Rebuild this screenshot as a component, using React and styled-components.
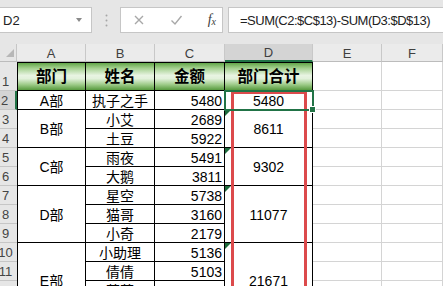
import React from "react";
import styled, { createGlobalStyle, css } from "styled-components";

const GlobalStyle = createGlobalStyle`
  html, body { margin: 0; padding: 0; background: #fff; overflow: hidden; }
  body { width: 443px; height: 286px; font-family: "Liberation Sans", "Noto Sans CJK SC", sans-serif; }
`;

const Toolbar = styled.div`
  height: 44px;
  box-sizing: border-box;
  padding-top: 7px;
  background: #e6e6e6;
  display: flex;
  align-items: flex-start;
`;

const Box = styled.div`
  height: 26px;
  box-sizing: border-box;
  background: #fff;
  border: 1px solid #c6c6c6;
  display: flex;
  align-items: center;
`;

const NameBox = styled(Box)`
  width: 92px;
  border-left: none;
  padding: 0 9px 0 3px;
  justify-content: space-between;
  font-size: 13px;
  color: #222;
`;

const Caret = styled.span`
  width: 0;
  height: 0;
  border-left: 3px solid transparent;
  border-right: 3px solid transparent;
  border-top: 4px solid #8a8a8a;
`;

const Grip = styled.div`
  width: 28px;
  height: 26px;
  display: flex;
  align-items: center;
  justify-content: center;
`;

const ActionBox = styled(Box)`
  width: 103px;
  padding: 0 6px 0 12px;
  justify-content: space-between;
  color: #a8a8a8;
`;

const Fx = styled.span`
  font-family: "Liberation Serif", serif;
  font-style: italic;
  font-size: 14px;
  color: #3c3c3c;
  sub { font-size: 10px; vertical-align: -1px; }
`;

const FormulaBox = styled(Box)`
  flex: 1;
  margin-left: 5px;
  border-right: none;
  padding-left: 11px;
  font-size: 13px;
  letter-spacing: -0.5px;
  color: #222;
  white-space: nowrap;
`;

const Sheet = styled.div`
  display: grid;
  grid-template-columns: 17px 69px 69px 70px 88px 69px 1fr;
  grid-template-rows: 18px 29px repeat(12, 19px);
`;

const place = css`
  grid-column: ${(p) => p.$c} / span 1;
  grid-row: ${(p) => p.$r} / span ${(p) => p.$rs || 1};
`;

const Corner = styled.div`
  grid-column: 1; grid-row: 1;
  background: #e6e6e6;
  border-right: 1px solid #c6c6c6;
  border-bottom: 1px solid #bcbcbc;
  box-sizing: border-box;
  display: flex;
  align-items: flex-end;
  justify-content: flex-end;
  padding: 0 2px 4px 0;
`;

const CornerMark = styled.span`
  width: 0; height: 0;
  border-left: 8px solid transparent;
  border-bottom: 8px solid #b7b7b7;
`;

const ColHead = styled.div`
  ${place}
  box-sizing: border-box;
  background: ${(p) => (p.$sel ? "#d4d4d4" : "#ebebeb")};
  border-right: 1px solid #c8c8c8;
  border-bottom: ${(p) => (p.$sel ? "2px solid #217346" : "1px solid #bcbcbc")};
  color: #404040;
  font-size: 13px;
  display: flex;
  align-items: center;
  justify-content: center;
  padding-top: 1px;
`;

const RowHead = styled.div`
  ${place}
  box-sizing: border-box;
  background: ${(p) => (p.$sel ? "#d4d4d4" : "#e6e6e6")};
  border-bottom: 1px solid #c6c6c6;
  border-right: ${(p) => (p.$sel ? "2px solid #217346" : "none")};
  color: #444;
  font-size: 13px;
  display: flex;
  align-items: flex-end;
  justify-content: center;
  padding: 0 6px 1px 0;
  white-space: nowrap;
`;

const Cell = styled.div`
  ${place}
  position: relative;
  box-sizing: border-box;
  border-right: 1px solid #000;
  border-bottom: 1px solid #000;
  border-left: ${(p) => (p.$c === 2 ? "1px solid #000" : "none")};
  border-top: ${(p) => (p.$head ? "1px solid #000" : "none")};
  display: flex;
  align-items: center;
  justify-content: ${(p) => (p.$right ? "flex-end" : "center")};
  padding: ${(p) => (p.$right ? "1px 2px 0 0" : "1px 0 0 0")};
  color: #000;
  font-size: ${(p) => (p.$head ? "15.5px" : "14px")};
  font-weight: ${(p) => (p.$head ? 700 : 400)};
  line-height: 1;
  white-space: nowrap;
  background: ${(p) =>
    p.$head
      ? "linear-gradient(180deg, #62a648 0%, #a6d191 20%, #e8f4e2 46%, #e2f1db 58%, #9dcb88 80%, #579a3e 100%)"
      : "#fff"};
`;

const Blank = styled.div`
  ${place}
  box-sizing: border-box;
  border-right: 1px solid #d4d4d4;
  border-bottom: 1px solid #d4d4d4;
`;

const Flag = styled.span`
  position: absolute;
  left: 0;
  top: 0;
  width: 0; height: 0;
  border-top: 6px solid #1d6b3c;
  border-right: 6px solid transparent;
`;

const RedFrame = styled.div`
  ${place}
  margin: 0 6px;
  border: 3px solid #dc4a4c;
  border-bottom: none;
  pointer-events: none;
  z-index: 2;
`;

const SelectFrame = styled.div`
  ${place}
  position: relative;
  margin: -1px;
  border: 2px solid #217346;
  pointer-events: none;
  z-index: 3;
`;

const Handle = styled.span`
  position: absolute;
  right: -4px;
  bottom: -4px;
  width: 5px;
  height: 5px;
  background: #217346;
  border: 1px solid #fff;
`;

const data = [
  { a: "A部", as: 1, b: "执子之手", c: 5480, d: "5480", ds: 1 },
  { a: "B部", as: 2, b: "小艾", c: 2689, d: "8611", ds: 2, flag: true },
  { b: "土豆", c: 5922 },
  { a: "C部", as: 2, b: "雨夜", c: 5491, d: "9302", ds: 2, flag: true },
  { b: "大鹅", c: 3811 },
  { a: "D部", as: 3, b: "星空", c: 5738, d: "11077", ds: 3, flag: true },
  { b: "猫哥", c: 3160 },
  { b: "小奇", c: 2179 },
  { a: "E部", as: 4, b: "小助理", c: 5136, d: "21671", ds: 4, flag: true },
  { b: "倩倩", c: 5103 },
  { b: "萌萌", c: 5912 },
  { b: "小米", c: 5520 },
];

function CrossIcon() {
  return (
    <svg width="12" height="12" viewBox="0 0 12 12">
      <path d="M2 2 L10 10 M10 2 L2 10" stroke="#a8a8a8" strokeWidth="1.4" fill="none" />
    </svg>
  );
}

function CheckIcon() {
  return (
    <svg width="13" height="12" viewBox="0 0 13 12">
      <path d="M1.5 6.5 L5 10 L11.5 2" stroke="#a8a8a8" strokeWidth="1.4" fill="none" />
    </svg>
  );
}

function GripIcon() {
  return (
    <svg width="3" height="13" viewBox="0 0 3 13">
      <circle cx="1.5" cy="1.5" r="1" fill="#a6a6a6" />
      <circle cx="1.5" cy="6.5" r="1" fill="#a6a6a6" />
      <circle cx="1.5" cy="11.5" r="1" fill="#a6a6a6" />
    </svg>
  );
}

export default function App() {
  const cols = ["A", "B", "C", "D", "E", "F"];
  return (
    <>
      <GlobalStyle />
      <Toolbar>
        <NameBox>
          <span>D2</span>
          <Caret />
        </NameBox>
        <Grip>
          <GripIcon />
        </Grip>
        <ActionBox>
          <CrossIcon />
          <CheckIcon />
          <Fx>
            f<sub>x</sub>
          </Fx>
        </ActionBox>
        <FormulaBox>=SUM(C2:$C$13)-SUM(D3:$D$13)</FormulaBox>
      </Toolbar>
      <Sheet>
        <Corner>
          <CornerMark />
        </Corner>
        {cols.map((c, i) => (
          <ColHead key={c} $c={i + 2} $r={1} $sel={c === "D"}>
            {c}
          </ColHead>
        ))}
        {Array.from({ length: 13 }, (_, i) => (
          <RowHead key={i} $c={1} $r={i + 2} $sel={i === 1}>
            {i + 1}
          </RowHead>
        ))}
        <Cell $c={2} $r={2} $head>部门</Cell>
        <Cell $c={3} $r={2} $head>姓名</Cell>
        <Cell $c={4} $r={2} $head>金额</Cell>
        <Cell $c={5} $r={2} $head>部门合计</Cell>
        {data.map((row, i) => {
          const r = i + 3;
          return (
            <React.Fragment key={r}>
              {row.a && (
                <Cell $c={2} $r={r} $rs={row.as}>
                  {row.a}
                </Cell>
              )}
              <Cell $c={3} $r={r}>{row.b}</Cell>
              <Cell $c={4} $r={r} $right>
                {row.c}
              </Cell>
              {row.d && (
                <Cell $c={5} $r={r} $rs={row.ds}>
                  {row.flag && <Flag />}
                  {row.d}
                </Cell>
              )}
            </React.Fragment>
          );
        })}
        {Array.from({ length: 13 }, (_, i) => (
          <React.Fragment key={"b" + i}>
            <Blank $c={6} $r={i + 2} />
            <Blank $c={7} $r={i + 2} />
          </React.Fragment>
        ))}
        <RedFrame $c={5} $r={3} $rs={12} />
        <SelectFrame $c={5} $r={3}>
          <Handle />
        </SelectFrame>
      </Sheet>
    </>
  );
}
